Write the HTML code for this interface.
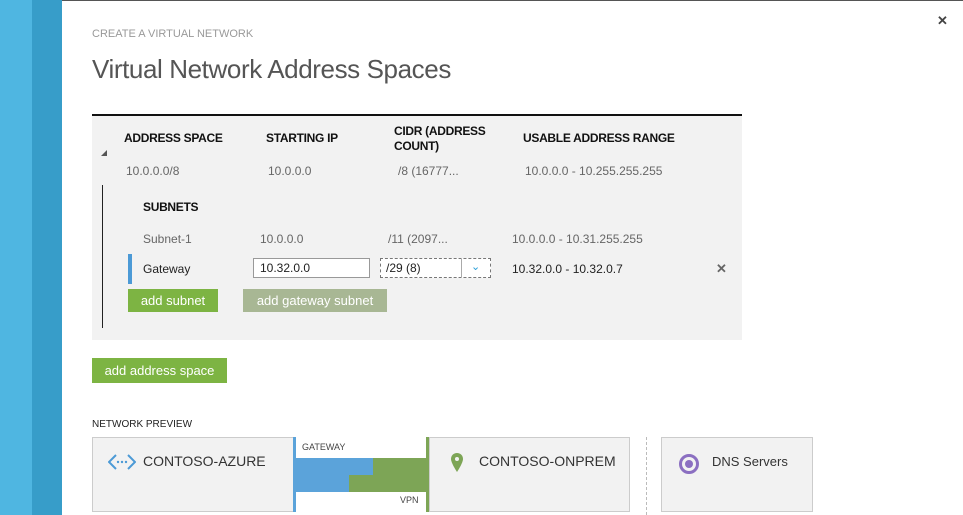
<!DOCTYPE html>
<html><head><style>
body{margin:0;width:963px;height:515px;overflow:hidden;background:#fff;font-family:"Segoe UI","Liberation Sans",sans-serif;position:relative}
.a{position:absolute;white-space:nowrap}
.h{font-size:12px;font-weight:bold;color:#111;letter-spacing:-0.3px}
.g{font-size:12px;color:#666}
.k{font-size:12px;color:#222}
.btn{position:absolute;color:#fff;font-size:13px;text-align:center;line-height:23px}
.box{position:absolute;background:#f2f2f2;border:1px solid #ccc;box-sizing:border-box;top:437px;height:75px}
</style></head><body>
<div class="a" style="left:0;top:0;width:32px;height:515px;background:#4fb6e1"></div>
<div class="a" style="left:32px;top:0;width:30px;height:515px;background:#379dc9"></div>
<div class="a" style="left:62px;top:0;width:901px;height:1px;background:#555"></div>
<div class="a" style="left:937px;top:13px;font-size:13px;font-weight:bold;color:#444">✕</div>
<div class="a" style="left:92px;top:28px;font-size:11px;color:#999">CREATE A VIRTUAL NETWORK</div>
<div class="a" style="left:92px;top:54px;font-size:26px;color:#555;letter-spacing:-0.4px">Virtual Network Address Spaces</div>
<div class="a" style="left:92px;top:114px;width:650px;height:224px;background:#f2f2f2;border-top:2px solid #111"></div>
<div class="a" style="left:101px;top:150px;width:0;height:0;border-left:6px solid transparent;border-bottom:6px solid #555"></div>
<div class="a h" style="left:124px;top:131px">ADDRESS SPACE</div>
<div class="a h" style="left:266px;top:131px">STARTING IP</div>
<div class="a h" style="left:394px;top:124px;line-height:15px">CIDR (ADDRESS<br>COUNT)</div>
<div class="a h" style="left:523px;top:131px">USABLE ADDRESS RANGE</div>
<div class="a g" style="left:126px;top:164px">10.0.0.0/8</div>
<div class="a g" style="left:268px;top:164px">10.0.0.0</div>
<div class="a g" style="left:398px;top:164px">/8 (16777...</div>
<div class="a g" style="left:525px;top:164px">10.0.0.0 - 10.255.255.255</div>
<div class="a" style="left:102px;top:185px;width:1px;height:143px;background:#222"></div>
<div class="a h" style="left:143px;top:200px">SUBNETS</div>
<div class="a g" style="left:143px;top:232px">Subnet-1</div>
<div class="a g" style="left:260px;top:232px">10.0.0.0</div>
<div class="a g" style="left:388px;top:232px">/11 (2097...</div>
<div class="a g" style="left:512px;top:232px">10.0.0.0 - 10.31.255.255</div>
<div class="a" style="left:128px;top:254px;width:4px;height:30px;background:#4c9ad6"></div>
<div class="a k" style="left:143px;top:262px">Gateway</div>
<div class="a" style="left:253px;top:258px;width:117px;height:20px;border:1px solid #999;background:#fff;box-sizing:border-box;font-size:12px;padding-left:6px;line-height:18px;color:#222">10.32.0.0</div>
<div class="a" style="left:380px;top:258px;width:111px;height:20px;border:1px dashed #777;background:#fff;box-sizing:border-box;font-size:12px;padding-left:5px;line-height:18px;color:#222">/29 (8)<span style="position:absolute;left:80px;top:0;width:1px;height:18px;background:#aaa"></span><span style="position:absolute;left:90px;top:-1px;color:#2a9fd8;font-size:11px">⌄</span></div>
<div class="a k" style="left:512px;top:262px">10.32.0.0 - 10.32.0.7</div>
<div class="a" style="left:716px;top:261px;font-size:13px;font-weight:bold;color:#666">✕</div>
<div class="btn" style="left:128px;top:289px;width:90px;background:#7db443">add subnet</div>
<div class="btn" style="left:243px;top:289px;width:144px;background:#a8b794">add gateway subnet</div>
<div class="btn" style="left:92px;top:358px;width:135px;height:25px;line-height:25px;background:#7db443">add address space</div>
<div class="a" style="left:92px;top:419px;font-size:10px;color:#222">NETWORK PREVIEW</div>
<div class="box" style="left:92px;width:203px"></div>
<svg class="a" style="left:108px;top:453px" width="28" height="18" viewBox="0 0 28 18"><path d="M8 2 L1 9 L8 16 M20 2 L27 9 L20 16" fill="none" stroke="#4c9ad6" stroke-width="2"/><circle cx="10" cy="9" r="1.2" fill="#4c9ad6"/><circle cx="14" cy="9" r="1.2" fill="#4c9ad6"/><circle cx="18" cy="9" r="1.2" fill="#4c9ad6"/></svg>
<div class="a" style="left:143px;top:453px;font-size:14px;color:#333">CONTOSO-AZURE</div>
<div class="a" style="left:293px;top:437px;width:3px;height:75px;background:#5ba3da"></div>
<div class="a" style="left:426px;top:437px;width:3px;height:75px;background:#7da556"></div>
<div class="a" style="left:296px;top:458px;width:130px;height:34px;background:#7da556"></div>
<div class="a" style="left:296px;top:458px;width:77px;height:17px;background:#5ba3da"></div>
<div class="a" style="left:296px;top:475px;width:53px;height:17px;background:#5ba3da"></div>
<div class="a" style="left:302px;top:442px;font-size:9px;color:#444">GATEWAY</div>
<div class="a" style="left:400px;top:495px;font-size:9px;color:#444">VPN</div>
<div class="box" style="left:429px;width:201px"></div>
<svg class="a" style="left:451px;top:453px" width="12" height="19" viewBox="0 0 12 19"><path d="M6 0 C2.5 0 0 2.6 0 6 C0 10 6 19 6 19 C6 19 12 10 12 6 C12 2.6 9.5 0 6 0Z" fill="#7da556"/><circle cx="6" cy="6" r="2" fill="#f2f2f2"/></svg>
<div class="a" style="left:479px;top:453px;font-size:14px;color:#333">CONTOSO-ONPREM</div>
<div class="a" style="left:646px;top:437px;height:78px;border-left:1px dashed #bbb"></div>
<div class="box" style="left:661px;width:152px"></div>
<svg class="a" style="left:678px;top:453px" width="22" height="22" viewBox="0 0 22 22"><circle cx="11" cy="11" r="8.5" fill="none" stroke="#8b6fc1" stroke-width="3"/><circle cx="11" cy="11" r="4" fill="#8b6fc1"/></svg>
<div class="a" style="left:712px;top:454px;font-size:13px;color:#333">DNS Servers</div>
</body></html>
